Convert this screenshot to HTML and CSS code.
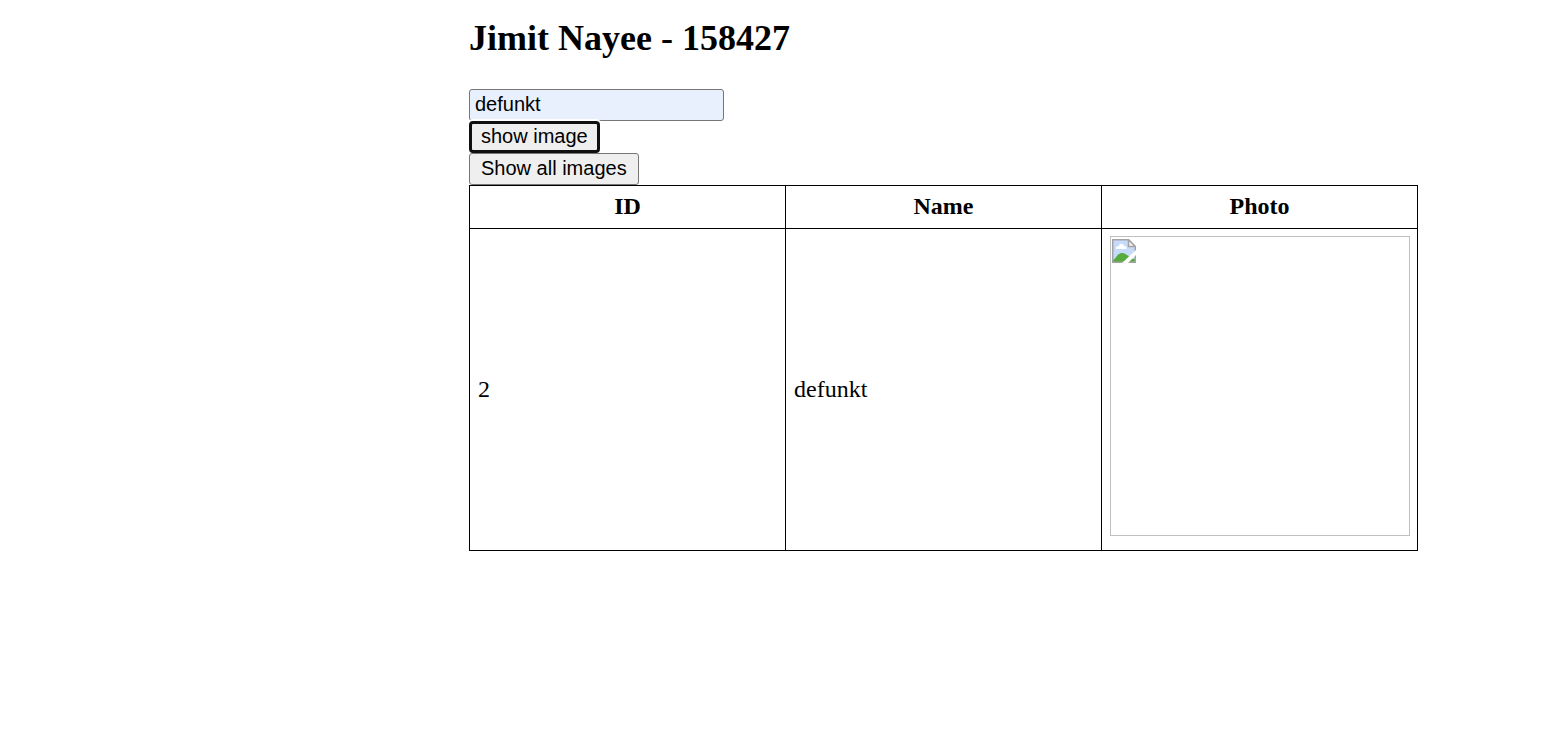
FILE: index.html
```html
<!DOCTYPE html>
<html lang="en">
<head>
<meta charset="utf-8">
<title>Images</title>
<link rel="stylesheet" href="styles.css">
</head>
<body>
<main class="page">
<h2 class="title">Jimit Nayee - 158427</h2>
<form class="controls">
<input class="name-field" type="text" value="defunkt" aria-label="Name">
<button class="button button-active" type="button">show image</button>
<button class="button" type="button">Show all images</button>
</form>
<table class="users">
<thead>
<tr><th scope="col">ID</th><th scope="col">Name</th><th scope="col">Photo</th></tr>
</thead>
<tbody>
<tr>
<td>2</td>
<td>defunkt</td>
<td class="photo-cell"><div class="photo">
<svg class="photo-icon" width="24" height="24" viewBox="0 0 24 24" aria-hidden="true">
<path d="M1 1h15l7 7v15H1z" fill="#c6dafa"/>
<path d="M4 10c-.5-2 1-3 2.500-2.500C7 4 11.500 4 12 7c2-.5 3 1.500 2.500 3z" fill="#fff"/>
<path d="M1 23v-2c3-1 4-7 9-7s6 5 13 6v3z" fill="#55ab3c"/>
<path d="M.75 23.250V.75H16.500l6.750 6.750v15.750z" fill="none" stroke="#a3a3a3" stroke-width="1.500"/>
<path d="M16.500.75V7.500h6.750z" fill="#f4f4f4" stroke="#a3a3a3" stroke-width="1.500"/>
<path d="M24 11v5L16 24h-6z" fill="#fff"/>
</svg>
</div></td>
</tr>
</tbody>
</table>
</main>
</body>
</html>
```
FILE: styles.css
```css
body {
  margin: 0;
  background: #fff;
  color: #000;
  font: 24px/27px "Liberation Serif", "Times New Roman", serif;
}
.page {
  padding: 18px 137px 0 469px;
}
.title {
  margin: 0 0 30px;
  font-size: 36px;
  line-height: 41px;
}
.controls {
  display: flex;
  flex-direction: column;
  align-items: flex-start;
}
.name-field,
.button {
  box-sizing: border-box;
  height: 32px;
  margin: 0;
  border: 1px solid #767676;
  border-radius: 3px;
  color: #000;
  font: 20px/24px "Liberation Sans", Arial, sans-serif;
}
.name-field {
  width: 255px;
  padding: 1px 5px 3px;
  background: #e8f0fe;
}
.button {
  padding: 0 11px 2px;
  background: #efefef;
}
.button-active {
  padding: 0 9px 2px;
  border: 3px solid #101010;
  border-radius: 4px;
  box-shadow: 0 0 0 2px #fff;
}
.button-active + .button {
  position: relative;
}
.users {
  width: 100%;
  table-layout: fixed;
  border-collapse: collapse;
}
.users th,
.users td {
  padding: 7px 8px 8px;
  border: 1px solid #000;
}
.users td {
  text-align: left;
}
.users .photo-cell {
  padding: 7px 7px 14px 8px;
}
.photo {
  box-sizing: border-box;
  aspect-ratio: 1;
  padding: 2px 1px;
  border: 1px solid #c0c0c0;
}
.photo-icon {
  display: block;
}
```
